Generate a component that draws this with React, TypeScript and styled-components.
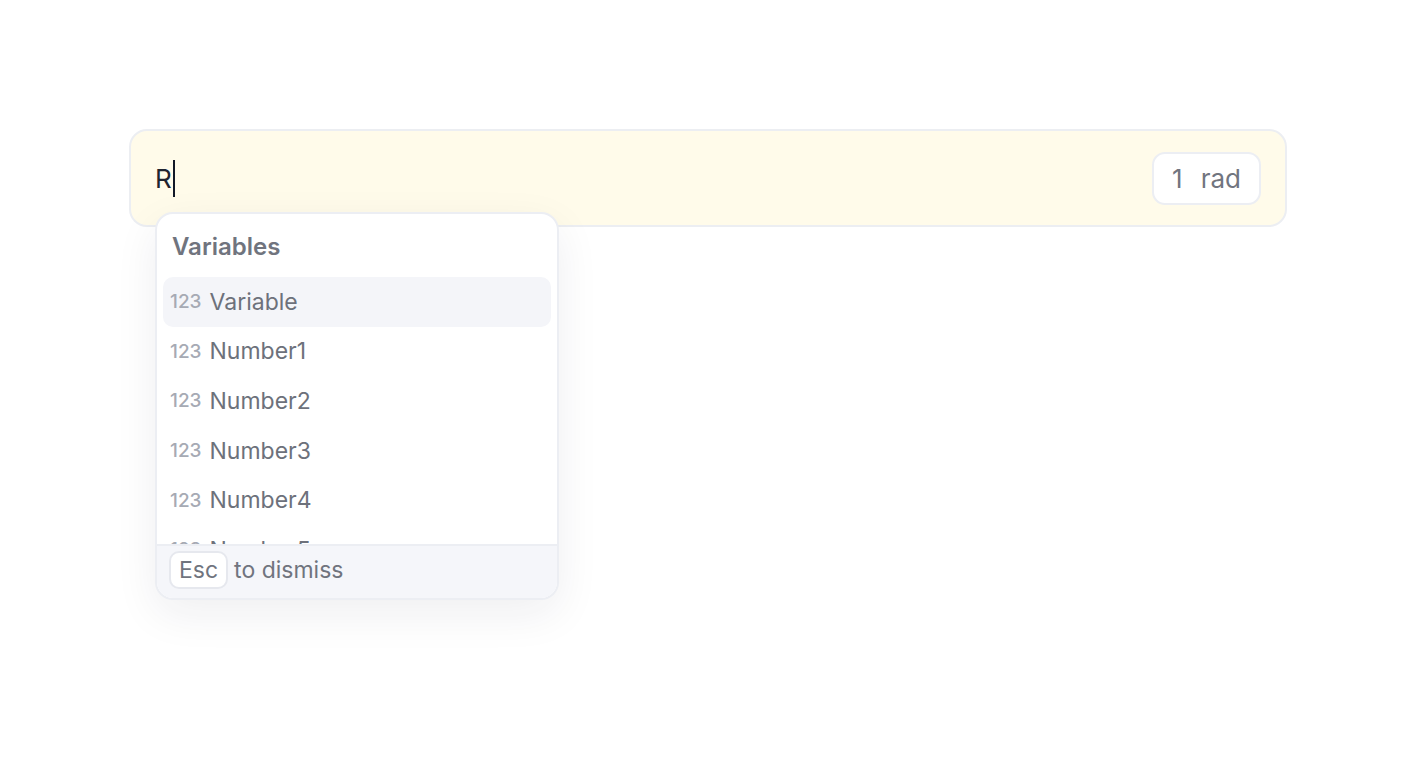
import React from 'react';
import styled, { createGlobalStyle } from 'styled-components';

const GlobalStyle = createGlobalStyle`
  html, body {
    margin: 0;
    padding: 0;
    background: #ffffff;
    font-family: Inter, 'Noto Sans', sans-serif;
  }
`;

const Page = styled.div`
  box-sizing: border-box;
  min-height: 759px;
  padding: 129px 129px;
`;

const Field = styled.div`
  position: relative;
  height: 94px;
  box-sizing: content-box;
  border: 2px solid #eceef2;
  border-radius: 18px;
  background: #fffbea;
  display: flex;
  align-items: center;
  justify-content: space-between;
  padding: 0 24px;
`;

const Input = styled.div`
  display: flex;
  align-items: center;
  font-size: 26px;
  color: #1f2430;
`;

const Caret = styled.span`
  display: inline-block;
  width: 2px;
  height: 37px;
  background: #111827;
  margin-left: 1px;
`;

const UnitBadge = styled.div`
  display: flex;
  align-items: center;
  gap: 18px;
  height: 49px;
  padding: 0 18px;
  border: 2px solid #eceef3;
  border-radius: 13px;
  background: #ffffff;
  font-size: 26px;
  color: #71757f;
`;

const Dropdown = styled.div`
  position: absolute;
  top: 81px;
  left: 24px;
  width: 400px;
  height: 384px;
  border: 2px solid #eceef3;
  border-radius: 18px;
  background: #ffffff;
  box-shadow: 0 14px 44px rgba(30, 35, 60, 0.07);
  display: flex;
  flex-direction: column;
  overflow: hidden;
`;

const GroupTitle = styled.div`
  padding: 17px 15px 14px;
  font-size: 24px;
  font-weight: 600;
  line-height: 32px;
  color: #70747e;
`;

const List = styled.div`
  flex: 1;
  overflow: hidden;
  padding: 0 6px;
`;

const Item = styled.div<{ active?: boolean }>`
  display: flex;
  align-items: center;
  gap: 8px;
  height: 49.6px;
  padding: 0 7px;
  border-radius: 10px;
  background: ${({ active }) => (active ? '#f4f5f9' : 'transparent')};
`;

const TypeTag = styled.span`
  font-size: 19px;
  font-weight: 500;
  color: #a6aab4;
`;

const Label = styled.span`
  font-size: 23px;
  color: #6d717b;
`;

const Footer = styled.div`
  display: flex;
  align-items: center;
  gap: 6px;
  height: 54px;
  box-sizing: border-box;
  padding: 0 12px 5px;
  border-top: 2px solid #eceef3;
  background: #f5f6fa;
  font-size: 23px;
  color: #70747e;
`;

const Kbd = styled.span`
  display: inline-flex;
  align-items: center;
  height: 38px;
  box-sizing: border-box;
  padding: 0 8px;
  border: 2px solid #e6e8ee;
  border-radius: 10px;
  background: #ffffff;
`;

const variables = ['Variable', 'Number1', 'Number2', 'Number3', 'Number4', 'Number5', 'Number6'];

export default function App() {
  return (
    <Page>
      <GlobalStyle />
      <Field>
        <Input>
          R
          <Caret />
        </Input>
        <UnitBadge>
          <span>1</span>
          <span>rad</span>
        </UnitBadge>
        <Dropdown>
          <GroupTitle>Variables</GroupTitle>
          <List>
            {variables.map((name, i) => (
              <Item key={name} active={i === 0}>
                <TypeTag>123</TypeTag>
                <Label>{name}</Label>
              </Item>
            ))}
          </List>
          <Footer>
            <Kbd>Esc</Kbd>
            to dismiss
          </Footer>
        </Dropdown>
      </Field>
    </Page>
  );
}
